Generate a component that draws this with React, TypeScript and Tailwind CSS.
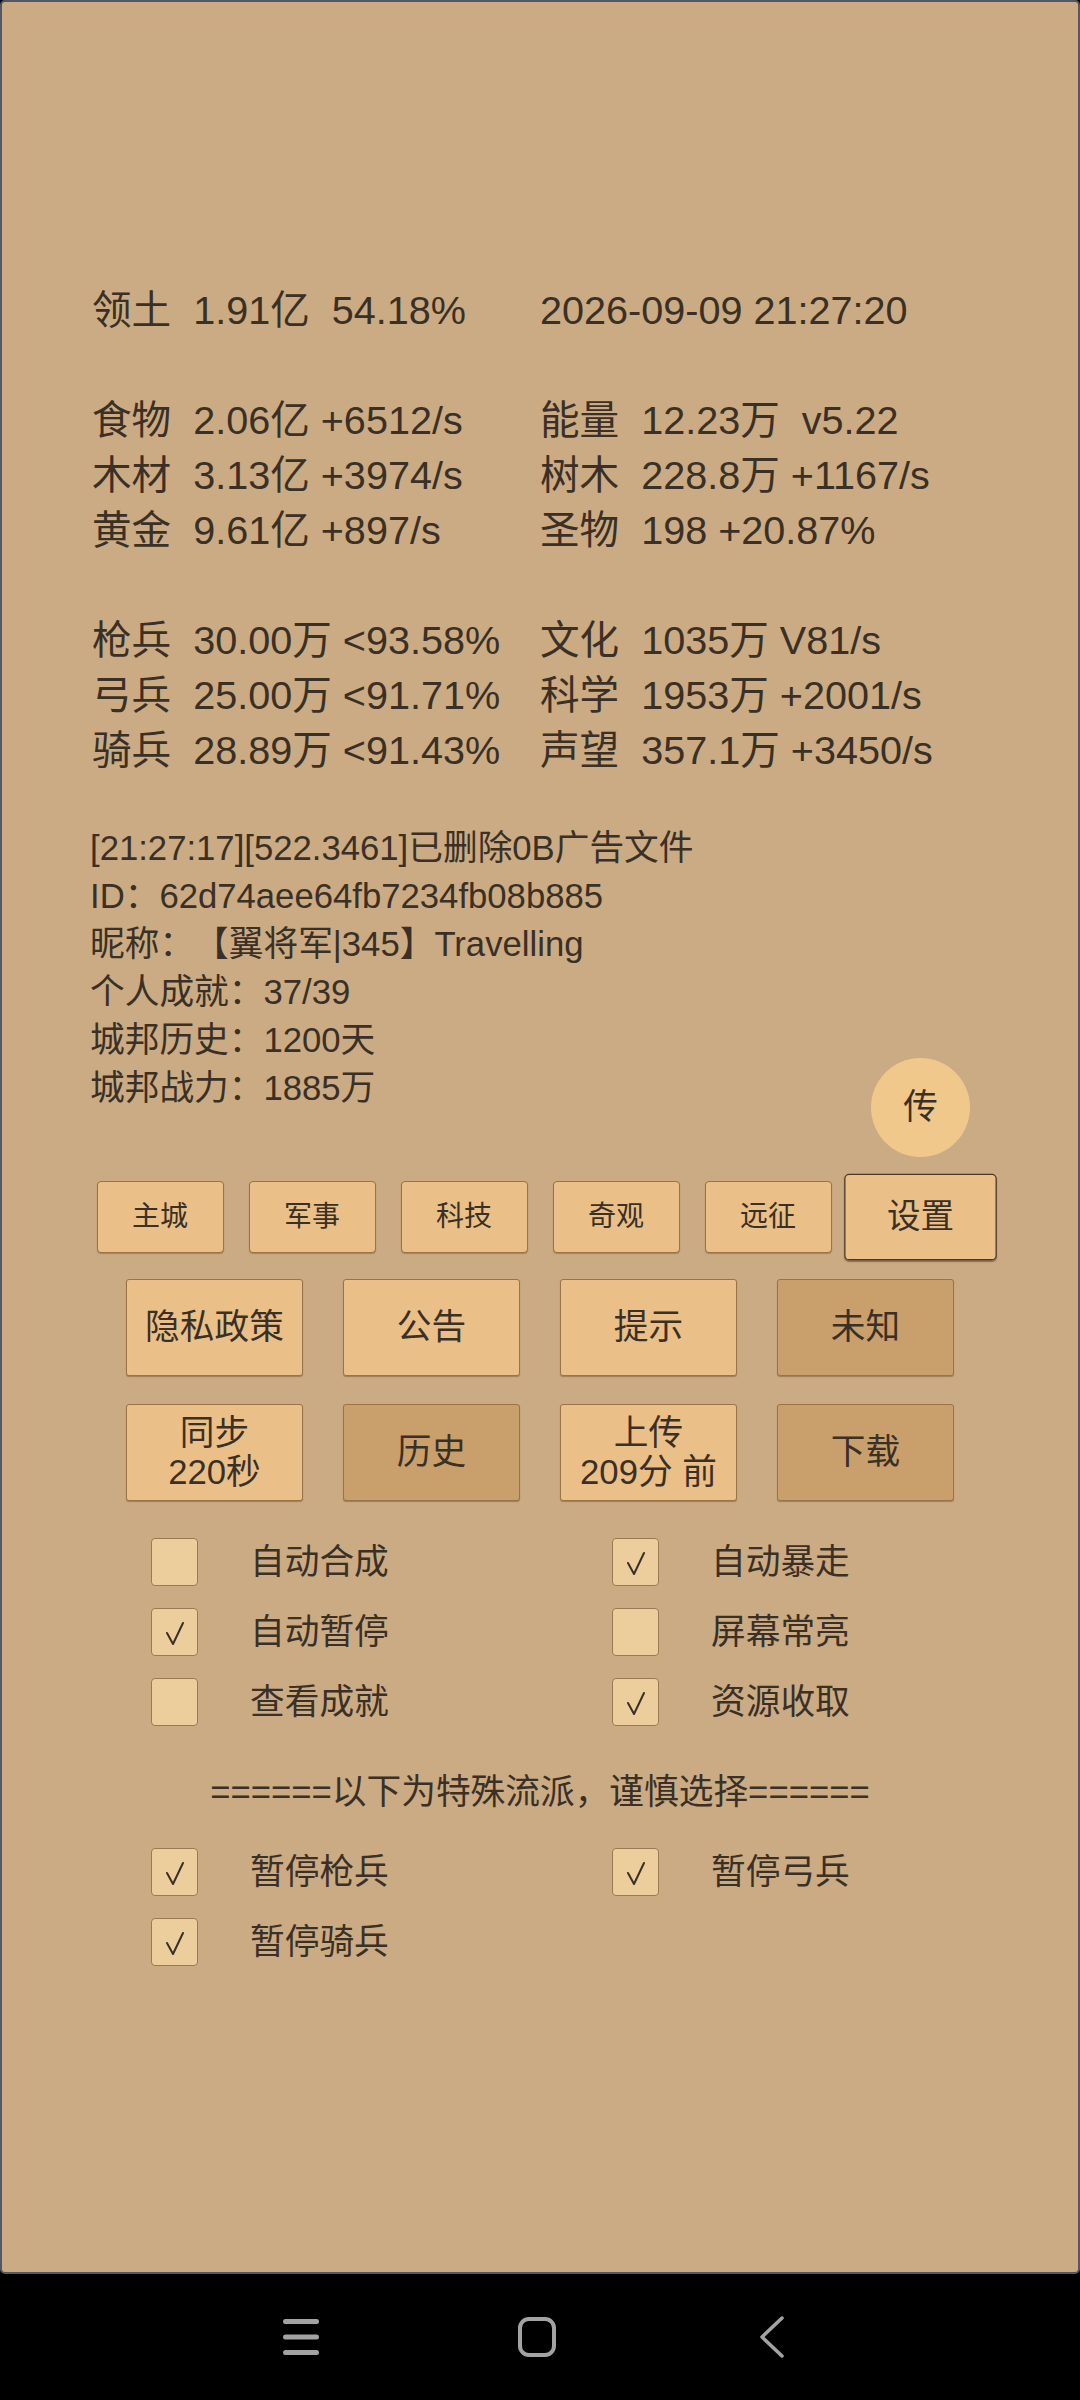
import React from "react";

const FONT = {
  fontFamily: '"Liberation Sans", "Noto Sans CJK SC", sans-serif',
};

const statRows: [string, string][] = [
  ["领土  1.91亿  54.18%", "2026-09-09 21:27:20"],
  ["", ""],
  ["食物  2.06亿 +6512/s", "能量  12.23万  v5.22"],
  ["木材  3.13亿 +3974/s", "树木  228.8万 +1167/s"],
  ["黄金  9.61亿 +897/s", "圣物  198 +20.87%"],
  ["", ""],
  ["枪兵  30.00万 <93.58%", "文化  1035万 V81/s"],
  ["弓兵  25.00万 <91.71%", "科学  1953万 +2001/s"],
  ["骑兵  28.89万 <91.43%", "声望  357.1万 +3450/s"],
];

const logLines = [
  "[21:27:17][522.3461]已删除0B广告文件",
  "ID：62d74aee64fb7234fb08b885",
  "昵称：【翼将军|345】Travelling",
  "个人成就：37/39",
  "城邦历史：1200天",
  "城邦战力：1885万",
];

function Check() {
  return (
    <svg width="48" height="48" viewBox="0 0 48 48" className="absolute inset-0">
      <path
        d="M15 24 L21 35 L31 14"
        fill="none"
        stroke="#3a3026"
        strokeWidth="2"
        strokeLinecap="round"
        strokeLinejoin="round"
      />
    </svg>
  );
}

function CheckItem({ label, checked }: { label: string; checked: boolean }) {
  return (
    <div className="flex items-center h-[48px]">
      <div className="relative w-[47px] h-[48px] rounded-[4px] border border-[#9a7a52] bg-[#eccd9c] shrink-0">
        {checked && <Check />}
      </div>
      <span className="ml-[52px] text-[34.7px] leading-[48px]">{label}</span>
    </div>
  );
}

function Tab({ label, active }: { label: string; active?: boolean }) {
  return (
    <div
      className={
        active
          ? "w-[127px] h-[72px] rounded-[4px] border-[1.5px] border-[#4a3a26] bg-[#eac088] flex items-center justify-center text-[28px] scale-[1.2] shadow-[0_1px_1px_rgba(0,0,0,0.35)]"
          : "w-[127px] h-[72px] rounded-[4px] border border-[#9a7448] bg-[#eac088] flex items-center justify-center text-[28px] shadow-[0_1px_1px_rgba(90,60,30,0.35)]"
      }
    >
      {label}
    </div>
  );
}

function BigButton({ lines, dark }: { lines: string[]; dark?: boolean }) {
  return (
    <div
      className={
        (dark ? "bg-[#c9a06c] " : "bg-[#eac088] ") +
        "w-[177px] h-[97px] rounded-[3px] border border-[#9a7448] shadow-[0_1px_1px_rgba(90,60,30,0.4)] flex flex-col items-center justify-center text-[34.7px] leading-[39px] whitespace-pre"
      }
    >
      {lines.map((l, i) => (
        <span key={i}>{l}</span>
      ))}
    </div>
  );
}

export default function App() {
  return (
    <div
      className="w-[1080px] h-[2400px] bg-black text-[#3a3026] [text-spacing-trim:space-all]"
      style={FONT}
    >
      <div className="relative h-[2274px] bg-[#cbab83] border-2 border-[#525866] rounded-[5px] flex flex-col">
        {/* stats */}
        <div className="pt-[281px] pl-[90px] text-[39.6px] leading-[55px] whitespace-pre">
          {statRows.map(([l, r], i) => (
            <div key={i} className="flex h-[55px]">
              <div className="w-[448px] shrink-0">{l}</div>
              <div>{r}</div>
            </div>
          ))}
        </div>

        {/* log */}
        <div className="mt-[46px] pl-[88px] text-[34.7px] leading-[48px] whitespace-pre">
          {logLines.map((l, i) => (
            <div key={i} className="h-[48px]">
              {l}
            </div>
          ))}
        </div>

        {/* floating 传 */}
        <div className="absolute left-[869px] top-[1056px] w-[99px] h-[99px] rounded-full bg-[#f1c88c] flex items-center justify-center text-[34.7px]">
          传
        </div>

        {/* tabs */}
        <div className="mt-[69px] flex justify-center gap-[25px]">
          <Tab label="主城" />
          <Tab label="军事" />
          <Tab label="科技" />
          <Tab label="奇观" />
          <Tab label="远征" />
          <Tab label="设置" active />
        </div>

        <div className="mt-[26px] flex justify-center gap-[40px]">
          <BigButton lines={["隐私政策"]} />
          <BigButton lines={["公告"]} />
          <BigButton lines={["提示"]} />
          <BigButton lines={["未知"]} dark />
        </div>

        <div className="mt-[28px] flex justify-center gap-[40px]">
          <BigButton lines={["同步", "220秒"]} />
          <BigButton lines={["历史"]} dark />
          <BigButton lines={["上传", "209分 前"]} />
          <BigButton lines={["下载"]} dark />
        </div>

        {/* checkboxes */}
        <div className="mt-[37px] pl-[149px] grid grid-cols-[461px_1fr] gap-y-[22px]">
          <CheckItem label="自动合成" checked={false} />
          <CheckItem label="自动暴走" checked />
          <CheckItem label="自动暂停" checked />
          <CheckItem label="屏幕常亮" checked={false} />
          <CheckItem label="查看成就" checked={false} />
          <CheckItem label="资源收取" checked />
        </div>

        <div className="mt-[42px] text-center text-[34.7px] leading-[48px] whitespace-pre">
          ======以下为特殊流派，谨慎选择======
        </div>

        <div className="mt-[32px] pl-[149px] grid grid-cols-[461px_1fr] gap-y-[22px]">
          <CheckItem label="暂停枪兵" checked />
          <CheckItem label="暂停弓兵" checked />
          <CheckItem label="暂停骑兵" checked />
        </div>
      </div>

      {/* nav bar */}
      <div className="h-[126px] flex items-center justify-center pr-[12px]">
        <div className="flex items-center">
          <svg width="40" height="40" viewBox="0 0 40 40">
            <rect x="2" y="2" width="36" height="5" rx="2.5" fill="#a3a3a3" />
            <rect x="2" y="17.5" width="36" height="5" rx="2.5" fill="#a3a3a3" />
            <rect x="2" y="33" width="36" height="5" rx="2.5" fill="#a3a3a3" />
          </svg>
          <svg width="40" height="42" viewBox="0 0 40 42" className="ml-[196px]">
            <rect x="3" y="3" width="34" height="36" rx="9" fill="none" stroke="#a3a3a3" strokeWidth="4" />
          </svg>
          <svg width="30" height="42" viewBox="0 0 30 42" className="ml-[200px]">
            <path d="M25 2 L5 21 L25 40" fill="none" stroke="#a3a3a3" strokeWidth="3.5" strokeLinecap="round" strokeLinejoin="round" />
          </svg>
        </div>
      </div>
    </div>
  );
}
